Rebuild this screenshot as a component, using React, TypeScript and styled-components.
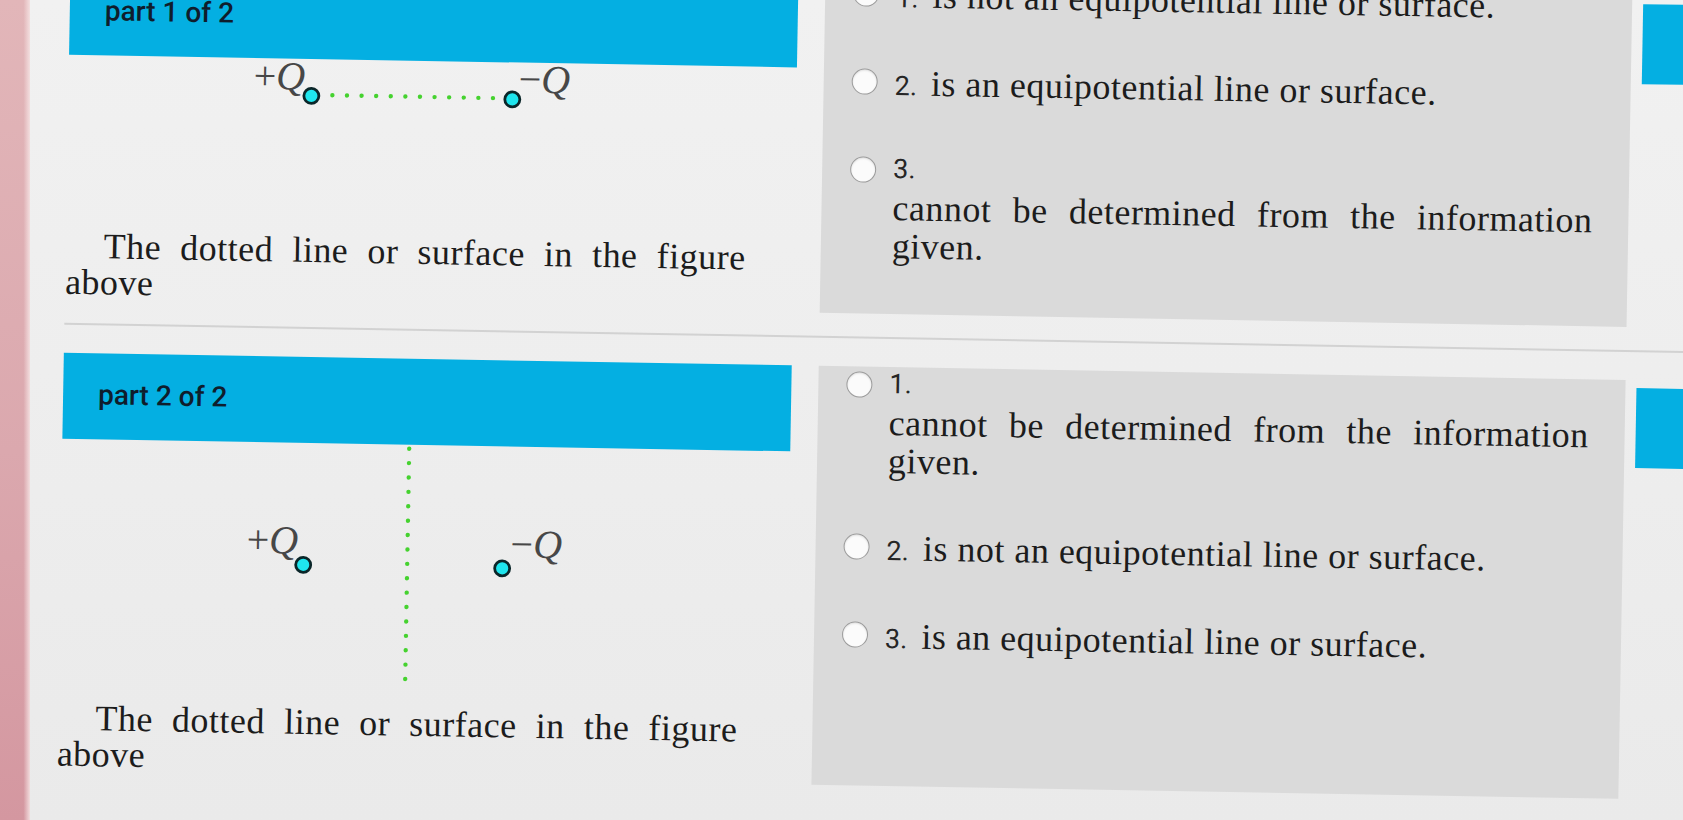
/**
 * Equipotential quiz, two parts, photographed slightly tilted
 */
import { FC } from 'react';
import styled, { createGlobalStyle } from 'styled-components';

const GlobalStyle = createGlobalStyle`
  html, body {
    margin: 0;
    padding: 0;
  }
  body {
    overflow: hidden;
    background: #ececec;
  }
  #root {
    width: 1683px;
    height: 820px;
  }
`;

const Screen = styled.div`
  display: flex;
  width: 1683px;
  height: 820px;
  overflow: hidden;
`;

const Bezel = styled.div`
  flex: 0 0 30px;
  background:
    linear-gradient(90deg, rgba(255, 255, 255, 0) 78%, rgba(245, 228, 228, 0.9) 100%),
    linear-gradient(180deg, #e2b6b9 0%, #dba8ae 55%, #d497a0 100%);
`;

const Viewport = styled.div`
  flex: 1;
  overflow: hidden;
  background: linear-gradient(180deg, #f1f1f1 0%, #ededed 60%, #eaeaea 100%);
`;

const Page = styled.div`
  width: 1700px;
  box-sizing: border-box;
  margin-top: -32px;
  padding-left: 40px;
  transform: rotate(1deg);
  transform-origin: 0 32px;
`;

const Part = styled.section`
  display: flex;
  align-items: stretch;
`;

const QuestionColumn = styled.div`
  flex: 0 0 728px;
  display: flex;
  flex-direction: column;
`;

const PartHeader = styled.div`
  height: 86px;
  box-sizing: border-box;
  padding: 25px 0 0 35px;
  background: #04afe2;
  font-family: Roboto, 'Liberation Sans', sans-serif;
  font-size: 28px;
  line-height: 34px;
  font-weight: 500;
  color: #0f1d2c;
`;

const Figure = styled.svg`
  display: block;
  flex-shrink: 0;
  overflow: visible;
`;

const Label = styled.text`
  font-family: 'Liberation Serif', 'Times New Roman', serif;
  font-size: 40px;
  fill: #474747;
`;

const Prompt = styled.p`
  margin: 0;
  width: 680px;
  text-indent: 38px;
  text-align: justify;
  font-family: 'Liberation Serif', 'Times New Roman', serif;
  font-size: 36px;
  line-height: 36px;
  letter-spacing: 0.5px;
  color: #1c1c1c;
`;

const Choices = styled.div<{ $lift: number }>`
  flex: 0 0 807px;
  margin: ${(p) => -p.$lift}px 0 0 27px;
  box-sizing: border-box;
  padding: 0 36px 0 28px;
  background: #dadada;
  display: flex;
  flex-direction: column;
  gap: 49px;
`;

const Choice = styled.label`
  display: flex;
  align-items: flex-start;
`;

const Radio = styled.span`
  flex: 0 0 26px;
  height: 26px;
  margin-top: 5px;
  box-sizing: border-box;
  border-radius: 50%;
  border: 1.5px solid #9a9a9a;
  background: #fbfbfb;
  box-shadow: inset 0 1px 2px rgba(0, 0, 0, 0.12);
`;

const ChoiceBody = styled.div`
  flex: 1;
  margin-left: 17px;
  font-family: 'Liberation Serif', 'Times New Roman', serif;
  font-size: 36px;
  line-height: 38px;
  letter-spacing: 0.5px;
  text-align: justify;
  color: #1c1c1c;
`;

const Num = styled.span<{ $alone?: boolean }>`
  display: ${(p) => (p.$alone ? 'block' : 'inline')};
  margin-right: 14px;
  font-family: Roboto, 'Liberation Sans', sans-serif;
  font-size: 27px;
  line-height: 34px;
  letter-spacing: 0;
  color: #262626;
`;

const Statement = styled.span<{ $block?: boolean }>`
  display: ${(p) => (p.$block ? 'block' : 'inline')};
  margin-top: ${(p) => (p.$block ? '3px' : '0')};
`;

const SideTab = styled.div`
  flex: 0 0 80px;
  height: 80px;
  margin: 8px 0 0 11px;
  background: #04afe2;
`;

const Divider = styled.hr`
  margin: 23px 0 28px;
  border: 0;
  height: 2px;
  background: #d2d2d2;
`;

interface IPointProps {
  x: number;
  y: number;
}

const Charge: FC<IPointProps> = ({ x, y }) => (
  <circle cx={x} cy={y} r={7.5} fill="#1fe6ee" stroke="#0a2629" strokeWidth={2.8} />
);

const Dot: FC<IPointProps> = ({ x, y }) => <circle cx={x} cy={y} r={2.2} fill="#45d22f" />;

interface IFigureProps {
  layout: 'row' | 'column';
}

const ChargeFigure: FC<IFigureProps> = ({ layout }) => {
  if (layout === 'row') {
    return (
      <Figure width={728} height={173}>
        <Label x={185} y={31}>
          +<tspan fontStyle="italic">Q</tspan>
        </Label>
        {Array.from({ length: 12 }, (_, i) => (
          <Dot key={i} x={264 + i * 14.6} y={36} />
        ))}
        <Charge x={243} y={37} />
        <Charge x={444} y={37} />
        <Label x={450} y={30}>
          −<tspan fontStyle="italic">Q</tspan>
        </Label>
      </Figure>
    );
  }

  return (
    <Figure width={728} height={261}>
      {Array.from({ length: 17 }, (_, i) => (
        <Dot key={i} x={347} y={4 + i * 14.4} />
      ))}
      <Label x={186} y={111}>
        +<tspan fontStyle="italic">Q</tspan>
      </Label>
      <Charge x={243} y={122} />
      <Charge x={442} y={122} />
      <Label x={450} y={111}>
        −<tspan fontStyle="italic">Q</tspan>
      </Label>
    </Figure>
  );
};

interface IOption {
  text: string;
  block?: boolean;
}

interface IPart {
  title: string;
  layout: 'row' | 'column';
  lift: number;
  options: IOption[];
}

const PROMPT = 'The dotted line or surface in the figure above';

const parts: IPart[] = [
  {
    title: 'part 1 of 2',
    layout: 'row',
    lift: 7,
    options: [
      { text: 'is not an equipotential line or surface.' },
      { text: 'is an equipotential line or surface.' },
      { text: 'cannot be determined from the information given.', block: true },
    ],
  },
  {
    title: 'part 2 of 2',
    layout: 'column',
    lift: 0,
    options: [
      { text: 'cannot be determined from the information given.', block: true },
      { text: 'is not an equipotential line or surface.' },
      { text: 'is an equipotential line or surface.' },
    ],
  },
];

const QuizPart: FC<{ part: IPart }> = ({ part }) => (
  <Part>
    <QuestionColumn>
      <PartHeader>{part.title}</PartHeader>
      <ChargeFigure layout={part.layout} />
      <Prompt>{PROMPT}</Prompt>
    </QuestionColumn>
    <Choices $lift={part.lift}>
      {part.options.map((option, i) => (
        <Choice key={i}>
          <Radio />
          <ChoiceBody>
            <Num $alone={option.block}>{i + 1}.</Num>
            <Statement $block={option.block}>{option.text}</Statement>
          </ChoiceBody>
        </Choice>
      ))}
    </Choices>
    <SideTab />
  </Part>
);

export default function App() {
  return (
    <>
      <GlobalStyle />
      <Screen>
        <Bezel />
        <Viewport>
          <Page>
            <QuizPart part={parts[0]} />
            <Divider />
            <QuizPart part={parts[1]} />
          </Page>
        </Viewport>
      </Screen>
    </>
  );
}
